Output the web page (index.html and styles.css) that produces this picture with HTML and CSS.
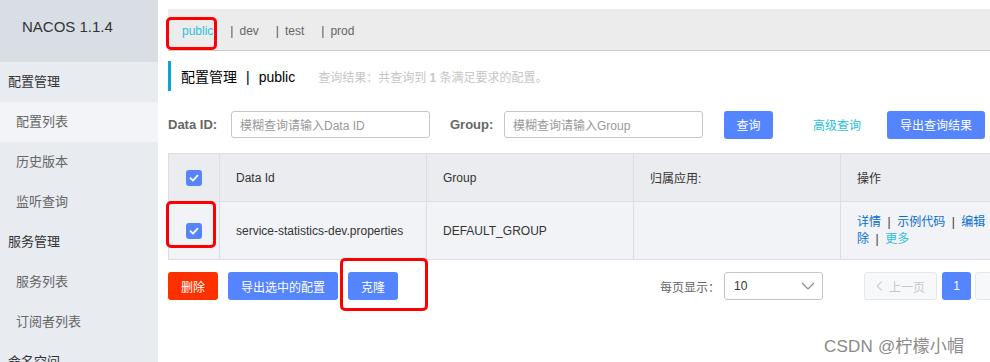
FILE: index.html
```html
<!DOCTYPE html>
<html lang="zh-CN">
<head>
<meta charset="utf-8">
<title>NACOS</title>
<link rel="stylesheet" href="styles.css">
</head>
<body>
<div class="app">
  <aside class="sidebar">
    <div class="logo">NACOS 1.1.4</div>
    <ul class="menu">
      <li class="group">配置管理</li>
      <li class="item active">配置列表</li>
      <li class="item">历史版本</li>
      <li class="item">监听查询</li>
      <li class="group">服务管理</li>
      <li class="item">服务列表</li>
      <li class="item">订阅者列表</li>
      <li class="group">命名空间</li>
    </ul>
  </aside>
  <main class="main">
    <nav class="ns-bar">
      <span class="ns current">public</span>
      <span class="ns"><span class="bar">|</span>dev</span>
      <span class="ns"><span class="bar">|</span>test</span>
      <span class="ns"><span class="bar">|</span>prod</span>
    </nav>
    <div class="title-row">
      <span class="title">配置管理<span class="title-sep">|</span>public</span>
      <span class="hint">查询结果：共查询到 <b>1</b> 条满足要求的配置。</span>
    </div>
    <div class="query-row">
      <label class="q-label label-id">Data ID:</label>
      <div class="input">模糊查询请输入Data ID</div>
      <label class="q-label label-group">Group:</label>
      <div class="input">模糊查询请输入Group</div>
      <button class="btn btn-primary btn-query">查询</button>
      <span class="link-adv">高级查询</span>
      <button class="btn btn-primary btn-export">导出查询结果</button>
    </div>
    <table class="grid">
      <colgroup>
        <col class="c-check"><col class="c-mid"><col class="c-mid"><col class="c-mid"><col class="c-op">
      </colgroup>
      <thead>
        <tr>
          <th class="cell-check"><span class="checkbox"><svg viewBox="0 0 16 16" width="16" height="16"><path d="M4.5 8.2 L7 10.6 L11.5 5.6" fill="none" stroke="#fff" stroke-width="1.8" stroke-linecap="round" stroke-linejoin="round"/></svg></span></th>
          <th>Data Id</th>
          <th>Group</th>
          <th>归属应用:</th>
          <th>操作</th>
        </tr>
      </thead>
      <tbody>
        <tr>
          <td class="cell-check"><span class="checkbox"><svg viewBox="0 0 16 16" width="16" height="16"><path d="M4.5 8.2 L7 10.6 L11.5 5.6" fill="none" stroke="#fff" stroke-width="1.8" stroke-linecap="round" stroke-linejoin="round"/></svg></span></td>
          <td>service-statistics-dev.properties</td>
          <td>DEFAULT_GROUP</td>
          <td></td>
          <td class="ops">
            <div class="ops-line"><a class="op">详情</a><span class="op-sep">|</span><a class="op">示例代码</a><span class="op-sep">|</span><a class="op">编辑</a><span class="op-sep">|</span><a class="op">删</a></div>
            <div class="ops-line"><a class="op">除</a><span class="op-sep">|</span><a class="op more">更多</a></div>
          </td>
        </tr>
      </tbody>
    </table>
    <div class="footer-row">
      <button class="btn btn-danger btn-del">删除</button>
      <button class="btn btn-primary btn-export-sel">导出选中的配置</button>
      <button class="btn btn-primary btn-clone">克隆</button>
      <span class="page-size-label">每页显示：</span>
      <div class="select"><span>10</span><svg class="chev" viewBox="0 0 14 8" width="14" height="8"><path d="M1 1 L7 7 L13 1" fill="none" stroke="#888" stroke-width="1.2"/></svg></div>
      <button class="page-btn page-prev"><svg viewBox="0 0 8 12" width="7" height="12"><path d="M6.5 1 L1.5 6 L6.5 11" fill="none" stroke="#c8c8c8" stroke-width="1.2"/></svg><span>上一页</span></button>
      <button class="page-btn page-cur">1</button>
      <button class="page-btn page-next"><span>下一页</span></button>
    </div>
  </main>
  <div class="mark mark-public"></div>
  <div class="mark mark-check"></div>
  <div class="mark mark-clone"></div>
  <div class="watermark">CSDN @柠檬小帽</div>
</div>
</body>
</html>
```

FILE: styles.css
```css
* { box-sizing: border-box; }
html, body {
  margin: 0;
  padding: 0;
  width: 990px;
  height: 362px;
  overflow: hidden;
  background: #fff;
  font-family: "Liberation Sans", "Noto Sans CJK SC", sans-serif;
  font-size: 12px;
  color: #333;
}
.app {
  position: relative;
  display: flex;
  width: 990px;
  height: 362px;
  overflow: hidden;
}
.sidebar {
  width: 158px;
  flex: none;
  background: #e8ebf0;
  height: 100%;
}
.logo {
  height: 62px;
  background: #d9dee5;
  display: flex;
  align-items: center;
  padding-left: 22px;
  padding-bottom: 10px;
  font-size: 15px;
  color: #333;
}
.menu {
  list-style: none;
  margin: 0;
  padding: 0;
}
.menu li {
  height: 40px;
  line-height: 40px;
  font-size: 13px;
}
.menu .group {
  padding-left: 8px;
  color: #333;
}
.menu .item {
  padding-left: 16px;
  color: #666;
}
.menu .item.active {
  background: #f3f4f7;
}
.main {
  flex: 1;
  min-width: 0;
  padding: 9px 0 0 10px;
  overflow: hidden;
}
.ns-bar {
  height: 42px;
  background: #ececec;
  border-bottom: 1px solid #c9c9c9;
  display: flex;
  align-items: center;
  padding-left: 14px;
  padding-top: 3px;
  color: #666;
}
.ns {
  margin-right: 17px;
}
.ns.current {
  color: #2cbfd8;
}
.ns .bar {
  margin-right: 6px;
  color: #555;
}
.title-row {
  margin-top: 10px;
  height: 30px;
  border-left: 3px solid #12a0d9;
  display: flex;
  align-items: center;
  padding-left: 10px;
}
.title {
  font-size: 14px;
  color: #000;
}
.title-sep {
  margin: 0 9px;
}
.hint {
  margin-left: 23px;
  color: #c6c6c6;
}
.hint b { font-weight: bold; }
.query-row {
  margin-top: 20px;
  height: 27px;
  display: flex;
  align-items: center;
}
.query-row > * { flex: none; }
.q-label {
  font-weight: bold;
  color: #666;
  font-size: 13px;
}
.label-id { width: 63px; }
.label-group { width: 54px; margin-left: 20px; }
.input {
  width: 199px;
  height: 27px;
  border: 1px solid #c4c6cf;
  border-radius: 3px;
  padding-left: 8px;
  display: flex;
  align-items: center;
  color: #999;
  font-size: 12px;
}
.btn {
  border: none;
  border-radius: 3px;
  height: 28px;
  color: #fff;
  font-family: inherit;
  font-size: 12px;
  padding: 0;
  cursor: pointer;
}
.btn-primary { background: #5584ff; }
.btn-danger { background: #ff3000; }
.btn-query { margin-left: 21px; width: 49px; }
.link-adv {
  margin-left: 40px;
  width: 74px;
  color: #2cbfd8;
}
.btn-export { width: 98px; margin-left: 0; }
.grid {
  margin-top: 15px;
  border-collapse: collapse;
  table-layout: fixed;
  width: 1000px;
}
.c-check { width: 51px; }
.c-mid { width: 207px; }
.c-op { width: 328px; }
.grid th, .grid td {
  border: 1px solid #dcdee3;
  text-align: left;
  font-weight: normal;
  padding: 0 0 0 16px;
  color: #333;
  vertical-align: middle;
}
.grid thead tr { height: 48px; background: #ebecf0; }
.grid tbody tr { height: 58px; background: #f2f3f7; }
.grid .cell-check {
  padding: 0;
  text-align: center;
}
.checkbox {
  display: inline-block;
  width: 16px;
  height: 16px;
  border-radius: 3px;
  background: #5584ff;
  vertical-align: middle;
}
.checkbox svg { display: block; }
.ops { line-height: 17px; }
.ops-line { white-space: nowrap; }
.op { color: #0a6ed1; }
.op.more { color: #2cbfd8; }
.op-sep { margin: 0 6.5px; color: #333; }
.footer-row {
  margin-top: 12px;
  height: 28px;
  display: flex;
  align-items: center;
  white-space: nowrap;
}
.footer-row > * { flex: none; }
.btn-del { width: 50px; }
.btn-export-sel { width: 110px; margin-left: 10px; }
.btn-clone { width: 50px; margin-left: 10px; }
.page-size-label {
  margin-left: 262px;
  width: 64px;
  color: #666;
}
.select {
  width: 99px;
  height: 28px;
  border: 1px solid #c4c6cf;
  border-radius: 3px;
  display: flex;
  align-items: center;
  justify-content: space-between;
  padding: 0 7px 0 9px;
  color: #333;
  font-size: 12px;
}
.chev { display: block; }
.page-btn {
  height: 28px;
  border-radius: 3px;
  font-family: inherit;
  font-size: 12px;
  padding: 0;
}
.page-prev {
  margin-left: 41px;
  width: 73px;
  background: #f7f8fa;
  border: 1px solid #e6e7eb;
  color: #c8c8c8;
  display: flex;
  align-items: center;
  justify-content: center;
  gap: 6px;
}
.page-prev svg { display: block; }
.page-cur {
  margin-left: 5px;
  width: 29px;
  background: #5584ff;
  border: none;
  color: #fff;
}
.page-next {
  margin-left: 4px;
  width: 73px;
  background: #f7f8fa;
  border: 1px solid #e6e7eb;
  color: #c8c8c8;
}
.mark {
  position: absolute;
  border: 3px solid #ff0000;
  border-radius: 5px;
}
.mark-public { left: 166px; top: 17px; width: 51px; height: 33px; }
.mark-check { left: 166px; top: 201px; width: 50px; height: 47px; }
.mark-clone { left: 340px; top: 258px; width: 88px; height: 53px; }
.watermark {
  position: absolute;
  left: 824px;
  top: 332px;
  font-size: 17px;
  color: #8a8a8a;
  letter-spacing: 0.2px;
  text-shadow: 0 0 2px #fff;
}
```
